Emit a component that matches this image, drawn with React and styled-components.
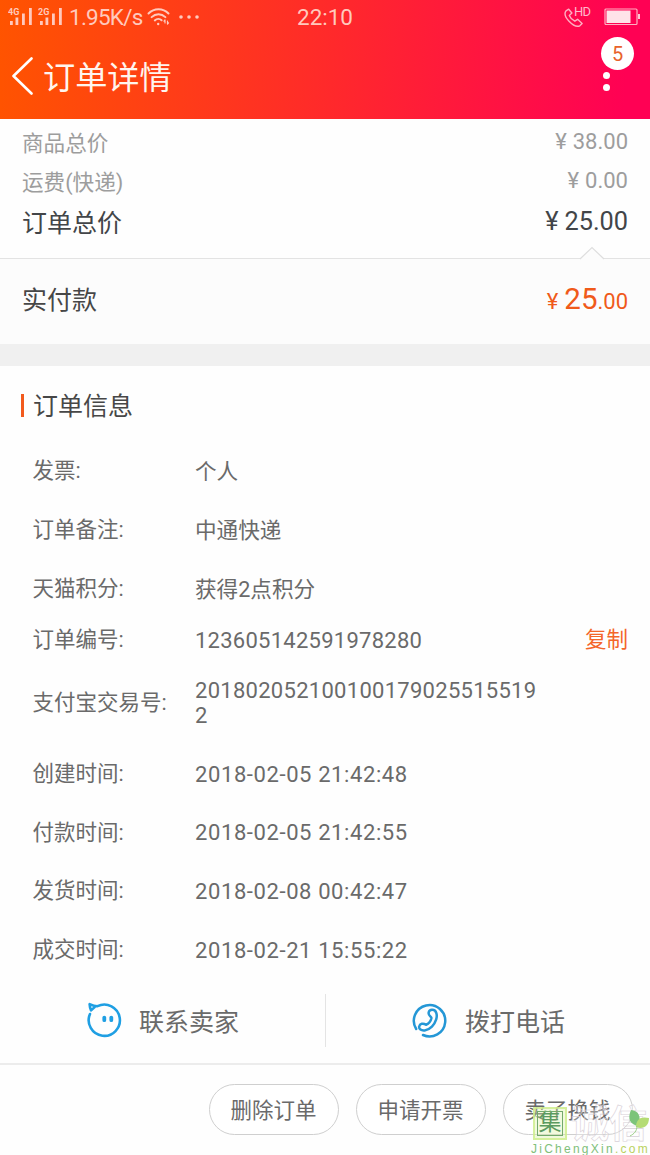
import React from 'react';
import styled, { createGlobalStyle } from 'styled-components';

const Global = createGlobalStyle`
  * { box-sizing: border-box; }
  body { margin: 0; background: #fff; }
`;

const Screen = styled.div`
  position: relative;
  width: 650px;
  height: 1155px;
  overflow: hidden;
  display: flex;
  flex-direction: column;
  background: #fefefe;
  color: #6a6a6a;
  font-family: Roboto, 'Noto Sans CJK SC', sans-serif;
  font-weight: 400;
`;

const Header = styled.header`
  height: 119px;
  flex: none;
  background: linear-gradient(94deg, #ff5400 0%, #ff2a2a 50%, #ff0154 96%);
  color: #fff;
`;

const StatusBar = styled.div`
  height: 34px;
  display: grid;
  grid-template-columns: 1fr auto 1fr;
  align-items: center;
  padding: 0 9px 2px 8px;
  color: #ffc9bd;
`;

const StatusGroup = styled.div`
  display: flex;
  align-items: center;
  justify-content: ${(p) => (p.$end ? 'flex-end' : 'flex-start')};
  svg { display: block; flex: none; }
`;

const Speed = styled.span`
  font-size: 22.5px;
  line-height: 32px;
  margin: 0 4px 0 1px;
  letter-spacing: -0.75px;
  white-space: nowrap;
`;

const Clock = styled.span`
  font-size: 22.5px;
  line-height: 32px;
  padding: 1px 0 0 1px;
`;

const TitleBar = styled.div`
  height: 85px;
  display: flex;
  align-items: center;
  padding: 0 14px 0 11px;
  svg { display: block; }
`;

const Title = styled.h1`
  flex: 1;
  margin: 0 0 0 9px;
  padding-top: 2px;
  font-size: 32.2px;
  font-weight: 400;
  line-height: 46px;
  color: #fff5ee;
`;

const MoreMenu = styled.div`
  display: flex;
  flex-direction: column;
  align-items: flex-start;
  width: 35px;
  padding-bottom: 11px;
  margin-bottom: 9px;
`;

const Badge = styled.span`
  width: 33px;
  height: 33px;
  margin-bottom: 2px;
  border-radius: 50%;
  background: #fff;
  color: #e8622c;
  font-size: 20px;
  line-height: 35px;
  text-align: center;
`;

const Dot = styled.i`
  width: 7px;
  height: 7px;
  margin: 0 0 5px 2px;
  border-radius: 50%;
  background: #fff;
`;

const Summary = styled.section`
  height: 140px;
  flex: none;
  padding: 2px 22px 0;
  border-bottom: 1px solid #e3e3e3;
`;

const PriceRow = styled.div`
  display: flex;
  justify-content: space-between;
  align-items: center;
  height: ${(p) => p.$h}px;
  font-size: ${(p) => (p.$strong ? 25 : 21.6)}px;
  color: ${(p) => (p.$strong ? '#424548' : '#9d9d9d')};
`;

const Amount = styled.span`
  padding-top: 1px;
  font-size: ${(p) => (p.$strong ? 25.3 : 22)}px;
`;

const Yen = styled.span`
  margin-right: 6px;
`;

const Paid = styled.section`
  position: relative;
  height: 85px;
  flex: none;
  display: flex;
  align-items: center;
  justify-content: space-between;
  padding: 0 22px 7px;
  background: #fcfcfc;
  color: #474747;
  font-size: 25px;
`;

const Notch = styled.svg`
  position: absolute;
  right: 44px;
  top: -13px;
`;

const PaidAmount = styled.span`
  padding-top: 2px;
  color: #f05a1a;
  font-size: 22px;
  b { font-size: 29.5px; font-weight: 400; }
`;

const Divider = styled.div`
  height: 22px;
  flex: none;
  background: #f0f0f0;
`;

const SectionTitle = styled.h2`
  height: 75px;
  flex: none;
  display: flex;
  align-items: center;
  margin: 0;
  padding: 1px 22px 0 21px;
  color: #474747;
  font-size: 25px;
  font-weight: 400;
  &::before {
    content: '';
    width: 3px;
    height: 23px;
    margin: 2px 9px 0 0;
    background: #f25a1d;
  }
`;

const InfoRow = styled.div`
  display: grid;
  grid-template-columns: 162px 350px 1fr;
  align-items: center;
  flex: none;
  height: ${(p) => p.$h}px;
  padding: 0 22px 0 33px;
  font-size: 21.5px;
`;

const Label = styled.span`
  padding-bottom: 4px;
  margin-left: -0.5px;
  white-space: nowrap;
`;

const Value = styled.span`
  font-size: ${(p) => (p.$digits ? 22 : 21.6)}px;
  line-height: 25px;
  letter-spacing: ${(p) => p.$spacing || 0}px;
  word-break: break-all;
  padding-top: 1px;
`;

const Copy = styled.button`
  justify-self: end;
  padding: 0 0 4px;
  border: 0;
  background: none;
  color: #f4652a;
  font: inherit;
  white-space: nowrap;
`;

const Contacts = styled.div`
  height: 84px;
  flex: none;
  display: flex;
  align-items: center;
  padding-bottom: 1px;
`;

const Contact = styled.div`
  width: 325px;
  height: 53px;
  display: flex;
  align-items: center;
  gap: 17px;
  padding-left: 85px;
  font-size: 25px;
  border-left: ${(p) => (p.$ruled ? '1px solid #e4e4e4' : '0')};
  span { padding-bottom: 2px; }
`;

const Footer = styled.footer`
  flex: 1;
  display: flex;
  justify-content: flex-end;
  gap: 17px;
  padding: 19px 17px 0;
  border-top: 2px solid #ececec;
`;

const Pill = styled.button`
  width: 130px;
  height: 51px;
  padding: 0 1px 2px 0;
  border: 1px solid #cfcfcf;
  border-radius: 26px;
  background: #fff;
  color: #6a6a6a;
  font: inherit;
  font-size: 21.5px;
  white-space: nowrap;
`;

const Watermark = styled.div`
  position: absolute;
  left: 533px;
  top: 1107px;
  width: 117px;
`;

const MarkRow = styled.div`
  display: flex;
  align-items: center;
  height: 33px;
`;

const MarkSeal = styled.span`
  width: 34px;
  height: 33px;
  border: 2px solid rgba(206, 238, 140, 0.8);
  outline: 1.5px solid #73a96c;
  outline-offset: -5px;
  background: rgba(214, 240, 160, 0.35);
  color: #5c9a60;
  font-size: 23px;
  line-height: 28px;
  text-align: center;
`;

const MarkName = styled.span`
  margin-left: 4px;
  font-size: 38px;
  font-weight: 700;
  line-height: 34px;
  color: rgba(255, 255, 255, 0.3);
  -webkit-text-stroke: 0.6px #d8d0d8;
  white-space: nowrap;
`;

const MarkUrl = styled.div`
  margin: 1px 0 0 -2px;
  font-family: 'Liberation Sans', sans-serif;
  font-size: 12px;
  line-height: 16px;
  letter-spacing: 2.25px;
  color: #7fc07a;
  white-space: nowrap;
  i { font-style: normal; color: #b9d25e; }
`;

const MarkLeaf = styled.svg`
  position: absolute;
  left: 93px;
  top: 0;
`;

const Signal = ({ label }) => (
  <svg width="30" height="22" viewBox="0 0 30 22" fill="currentColor">
    <text x="0" y="8.5" fontSize="9" fontWeight="700" fontFamily="Roboto">{label}</text>
    <rect x="2" y="15" width="2.8" height="4" />
    <rect x="7.5" y="11.5" width="2.8" height="7.5" />
    <rect x="14" y="7.5" width="2.8" height="11.5" />
    <rect x="21" y="2" width="2.8" height="17" />
  </svg>
);

const Wifi = () => (
  <svg width="23" height="20" viewBox="0 0 23 20" fill="none" stroke="currentColor" strokeWidth="2" strokeLinecap="round">
    <path d="M1.5 6.5C7 .8 16 .8 21.5 6.5M4.6 10.1c4-3.8 9.8-3.8 13.8 0M7.8 13.4c2-1.9 5-1.9 6.8-.2" />
    <circle cx="11.2" cy="17" r="1.2" fill="currentColor" stroke="none" />
    <path d="M18 13v3M18 13l-1 1.2M20.5 14v3M20.5 17l1-1.2" strokeWidth="1.2" />
  </svg>
);

const Dots = styled.svg`
  margin-left: 8px;
`;

const Ellipsis = () => (
  <Dots width="24" height="6" viewBox="0 0 24 6" fill="currentColor">
    <circle cx="3" cy="3" r="1.8" />
    <circle cx="11" cy="3" r="1.8" />
    <circle cx="19" cy="3" r="1.8" />
  </Dots>
);

const CallHD = () => (
  <svg width="30" height="23" viewBox="0 0 30 23" fill="none" stroke="#ffafc2" strokeWidth="1.4" strokeLinejoin="round">
    <path d="M4.7 4.2 2 5.8C.1 8.4 1.4 12.3 4.8 16c3.6 3.8 7.9 6.3 11 4.8l2.3-2.4-4.5-4.1-2.8 1.9c-2.6-1.2-4.5-3.3-5.5-5.8l2.6-2.4z" />
    <text x="10" y="11" fontSize="13" fontFamily="Roboto" letterSpacing="-0.8" fill="#ffb9ca" stroke="none">HD</text>
  </svg>
);

const BatteryBody = styled.svg`
  margin-left: 10px;
`;

const Battery = () => (
  <BatteryBody width="37" height="18" viewBox="0 0 37 18">
    <rect x="1" y="1" width="32" height="15.5" rx="1" fill="none" stroke="#ffafc2" strokeWidth="1.2" />
    <rect x="2.5" y="2.5" width="24" height="12.5" fill="#ffe3e9" />
    <rect x="34" y="6" width="2" height="5" fill="#ffc5d2" />
  </BatteryBody>
);

const BackIcon = () => (
  <svg width="23" height="40" viewBox="0 0 23 40" fill="none" stroke="#fff" strokeWidth="2.6" strokeLinecap="round" strokeLinejoin="round">
    <path d="M20.5 1.5 2.5 19l18 17.5" />
  </svg>
);

const ChatIcon = () => (
  <svg width="37" height="37" viewBox="-1 0 37 37" fill="none" stroke="#1f9fe3" strokeWidth="2.6" strokeLinecap="round" strokeLinejoin="round">
    <path d="M4 12A15.6 15.6 0 1 0 11.5 4.2C9 4.2 6.3 3.4 3.6 2.2c.1 2.4 .6 4.2 1.5 6.2L8.4 5.4" />
    <path d="M18.3 15.6v2.6M25.3 15.6v2.6" strokeWidth="3.8" />
  </svg>
);

const PhoneIcon = () => (
  <svg width="37" height="37" viewBox="0 0 37 37" fill="none" stroke="#2497d6" strokeWidth="2.5" strokeLinecap="round" strokeLinejoin="round">
    <path d="M5.2 27A15.7 15.7 0 1 1 12 33" />
    <path d="M19.4 14.4c-3-2.4-2-6.3 1.6-6.6 4.8-.2 5.4 5.6 4.2 9.6-1.6 5.2-6 10.3-11.5 11-3.4.4-6.1-1.3-5.5-4 .6-2.8 4-3.6 6.8-1.6 2.8-1.2 4.7-3.6 5.4-6.6.1-.8-.4-1.3-1-1.8z" />
  </svg>
);

const orderInfo = [
  { label: '发票:', value: '个人', h: 59 },
  { label: '订单备注:', value: '中通快递', h: 59 },
  { label: '天猫积分:', value: '获得2点积分', h: 59 },
  { label: '订单编号:', value: '123605142591978280', h: 43, digits: true, spacing: 0.26, copy: true },
  { label: '支付宝交易号:', value: '2018020521001001790255155192', h: 83, digits: true, spacing: 0.28 },
  { label: '创建时间:', value: '2018-02-05 21:42:48', h: 59, digits: true, spacing: 0.6 },
  { label: '付款时间:', value: '2018-02-05 21:42:55', h: 58, digits: true, spacing: 0.6 },
  { label: '发货时间:', value: '2018-02-08 00:42:47', h: 59, digits: true, spacing: 0.6 },
  { label: '成交时间:', value: '2018-02-21 15:55:22', h: 59, digits: true, spacing: 0.6 },
];

export default function App() {
  return (
    <Screen>
      <Global />
      <Header>
        <StatusBar>
          <StatusGroup>
            <Signal label="4G" />
            <Signal label="2G" />
            <Speed>1.95K/s</Speed>
            <Wifi />
            <Ellipsis />
          </StatusGroup>
          <Clock>22:10</Clock>
          <StatusGroup $end>
            <CallHD />
            <Battery />
          </StatusGroup>
        </StatusBar>
        <TitleBar>
          <BackIcon />
          <Title>订单详情</Title>
          <MoreMenu>
            <Badge>5</Badge>
            <Dot />
            <Dot />
          </MoreMenu>
        </TitleBar>
      </Header>

      <Summary>
        <PriceRow $h={40}>商品总价<Amount><Yen>¥</Yen>38.00</Amount></PriceRow>
        <PriceRow $h={38}>运费(快递)<Amount><Yen>¥</Yen>0.00</Amount></PriceRow>
        <PriceRow $h={44} $strong>订单总价<Amount $strong><Yen>¥</Yen>25.00</Amount></PriceRow>
      </Summary>
      <Paid>
        <Notch width="28" height="14" viewBox="0 0 28 14">
          <path d="M2 13 14 1.5 26 13" fill="#fcfcfc" stroke="#dedede" strokeWidth="1.2" />
        </Notch>
        实付款
        <PaidAmount><Yen>¥</Yen><b>25</b>.00</PaidAmount>
      </Paid>
      <Divider />

      <SectionTitle>订单信息</SectionTitle>
      {orderInfo.map((row) => (
        <InfoRow key={row.label} $h={row.h}>
          <Label>{row.label}</Label>
          <Value $digits={row.digits} $spacing={row.spacing}>{row.value}</Value>
          {row.copy && <Copy>复制</Copy>}
        </InfoRow>
      ))}

      <Contacts>
        <Contact><ChatIcon /><span>联系卖家</span></Contact>
        <Contact $ruled><PhoneIcon /><span>拨打电话</span></Contact>
      </Contacts>
      <Footer>
        <Pill>删除订单</Pill>
        <Pill>申请开票</Pill>
        <Pill>卖了换钱</Pill>
      </Footer>

      <Watermark>
        <MarkRow>
          <MarkSeal>集</MarkSeal>
          <MarkName>诚信</MarkName>
        </MarkRow>
        <MarkUrl>JiChengXin<i>.com</i></MarkUrl>
        <MarkLeaf width="26" height="32" viewBox="0 0 26 32">
          <path d="M5 3c8 1 10 6 8 16C4 18 1 12 5 3z" fill="#7cc47a" />
          <path d="M10 20c0-8 5-11 13-9 0 8-6 12-13 9z" fill="#b5dc74" />
          <path d="M11 19c0 5-3 8-7 10" fill="none" stroke="#9bcf86" />
        </MarkLeaf>
      </Watermark>
    </Screen>
  );
}
